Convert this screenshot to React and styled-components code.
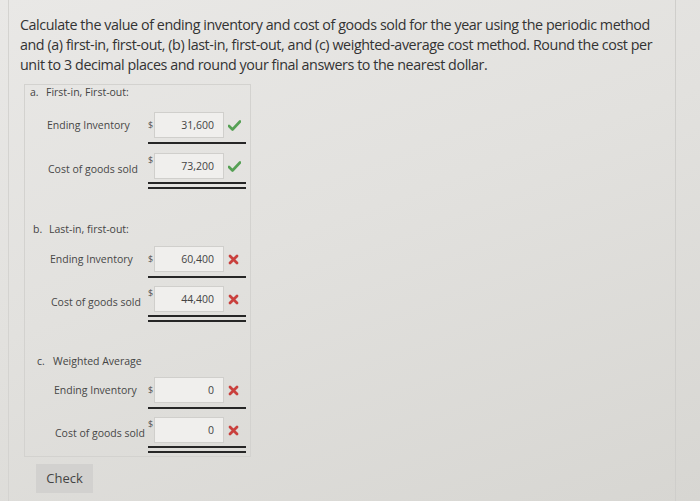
import React from "react";
import styled, { createGlobalStyle } from "styled-components";

const GlobalStyle = createGlobalStyle`
  html, body {
    margin: 0;
    padding: 0;
    height: 100%;
  }
  body {
    background: linear-gradient(160deg, #e9e8e6 0%, #e2e1de 45%, #d7d6d2 100%);
    font-family: "Open Sans", "Liberation Sans", sans-serif;
    font-variant-ligatures: none;
    color: #3a3a3a;
  }
`;

const Page = styled.div`
  height: 501px;
  overflow: hidden;
`;

const Card = styled.div`
  margin-left: 8px;
  width: 668px;
  height: 501px;
  box-sizing: border-box;
  border-left: 1px solid #d4d3d0;
  border-right: 1px solid #cfcecb;
  padding: 15px 0 0 11px;
`;

const Question = styled.p`
  margin: 0;
  width: 656px;
  font-size: 14.3px;
  line-height: 20px;
  color: #333;
  letter-spacing: -0.42px;
  white-space: nowrap;
`;

const AnswerBox = styled.div`
  margin: 9px 0 0 4px;
  width: 227px;
  box-sizing: border-box;
  border: 1px solid #d3d2cf;
  padding-bottom: 3px;
`;

const Section = styled.div`
  padding-left: ${(p) => 5 + p.shift}px;
  margin-top: ${(p) => p.gap}px;
`;

const SectionTitle = styled.div`
  display: flex;
  font-size: 10.5px;
  line-height: 14px;
  color: #444;
`;

const Letter = styled.span`
  width: 16px;
`;

const Row = styled.div`
  display: flex;
  align-items: flex-start;
  margin-top: ${(p) => p.gap}px;
  padding-left: ${(p) => p.indent}px;
`;

const Label = styled.div`
  width: ${(p) => p.width}px;
  padding-top: ${(p) => p.drop}px;
  font-size: 10.5px;
  line-height: 14px;
  color: #474747;
  white-space: nowrap;
`;

const Field = styled.div`
  display: flex;
  flex-direction: column;
  width: 98px;
`;

const Inner = styled.div`
  display: flex;
  align-items: center;
`;

const Dollar = styled.span`
  width: 6px;
  align-self: flex-start;
  margin-top: ${(p) => p.top}px;
  font-size: 9px;
  line-height: 10px;
  color: #555;
`;

const Input = styled.div`
  width: 70px;
  height: 26px;
  box-sizing: border-box;
  border: 1px solid #d0cfcc;
  background: #f0efed;
  font-size: 10.5px;
  line-height: 24px;
  text-align: right;
  padding-right: 9px;
  color: #444;
`;

const Mark = styled.span`
  display: flex;
  margin-left: 4px;
  width: 14px;
`;

const Rule = styled.div`
  margin-top: ${(p) => (p.double ? 3 : 4)}px;
  height: ${(p) => (p.double ? 7 : 2)}px;
  box-sizing: border-box;
  border-top: 2px solid #262626;
  border-bottom: ${(p) => (p.double ? "2px solid #262626" : "none")};
`;

const CheckButton = styled.button`
  margin: 7px 0 0 16px;
  width: 57px;
  height: 29px;
  border: none;
  background: #d2d1cf;
  font-family: "Open Sans", "Liberation Sans", sans-serif;
  font-size: 13px;
  color: #444;
  padding: 0 0 2px;
`;

const Tick = () => (
  <svg width="13" height="11" viewBox="0 0 13 11">
    <path d="M1 6 L4.5 9.5 L12 1.5" fill="none" stroke="#55a054" strokeWidth="2.6" strokeLinecap="round" strokeLinejoin="round" />
  </svg>
);

const Cross = () => (
  <svg width="11" height="11" viewBox="0 0 11 11">
    <path d="M2 2 L9 9 M9 2 L2 9" fill="none" stroke="#c9403d" strokeWidth="2.8" strokeLinecap="round" />
  </svg>
);

const sections = [
  {
    letter: "a.",
    title: "First-in, First-out:",
    shift: 0,
    gap: 0,
    good: true,
    rows: ["31,600", "73,200"],
  },
  {
    letter: "b.",
    title: "Last-in, first-out:",
    shift: 3,
    gap: 33,
    good: false,
    rows: ["60,400", "44,400"],
  },
  {
    letter: "c.",
    title: "Weighted Average",
    shift: 7,
    gap: 32,
    good: false,
    rows: ["0", "0"],
  },
];

const App = () => {
  return (
    <Page>
      <GlobalStyle />
      <Card>
        <Question>
          Calculate the value of ending inventory and cost of goods sold for the year using the periodic method
          <br />
          and (a) first-in, first-out, (b) last-in, first-out, and (c) weighted-average cost method. Round the cost per
          <br />
          unit to 3 decimal places and round your final answers to the nearest dollar.
        </Question>
        <AnswerBox>
          {sections.map((s, i) => (
            <Section key={s.letter} shift={s.shift} gap={s.gap}>
              <SectionTitle>
                <Letter>{s.letter}</Letter>
                {s.title}
              </SectionTitle>
              <Row gap={i === 0 ? 13 : 11 - i} indent={17}>
                <Label width={101 - s.shift} drop={6}>Ending Inventory</Label>
                <Field>
                  <Inner>
                    <Dollar top={8}>$</Dollar>
                    <Input>{s.rows[0]}</Input>
                    <Mark>{s.good ? <Tick /> : <Cross />}</Mark>
                  </Inner>
                  <Rule />
                </Field>
              </Row>
              <Row gap={i === 0 ? 9 : 8} indent={18}>
                <Label width={100 - s.shift} drop={9}>Cost of goods sold</Label>
                <Field>
                  <Inner>
                    <Dollar top={2}>$</Dollar>
                    <Input>{s.rows[1]}</Input>
                    <Mark>{s.good ? <Tick /> : <Cross />}</Mark>
                  </Inner>
                  <Rule double />
                </Field>
              </Row>
            </Section>
          ))}
        </AnswerBox>
        <CheckButton>Check</CheckButton>
      </Card>
    </Page>
  );
};

export default App;
